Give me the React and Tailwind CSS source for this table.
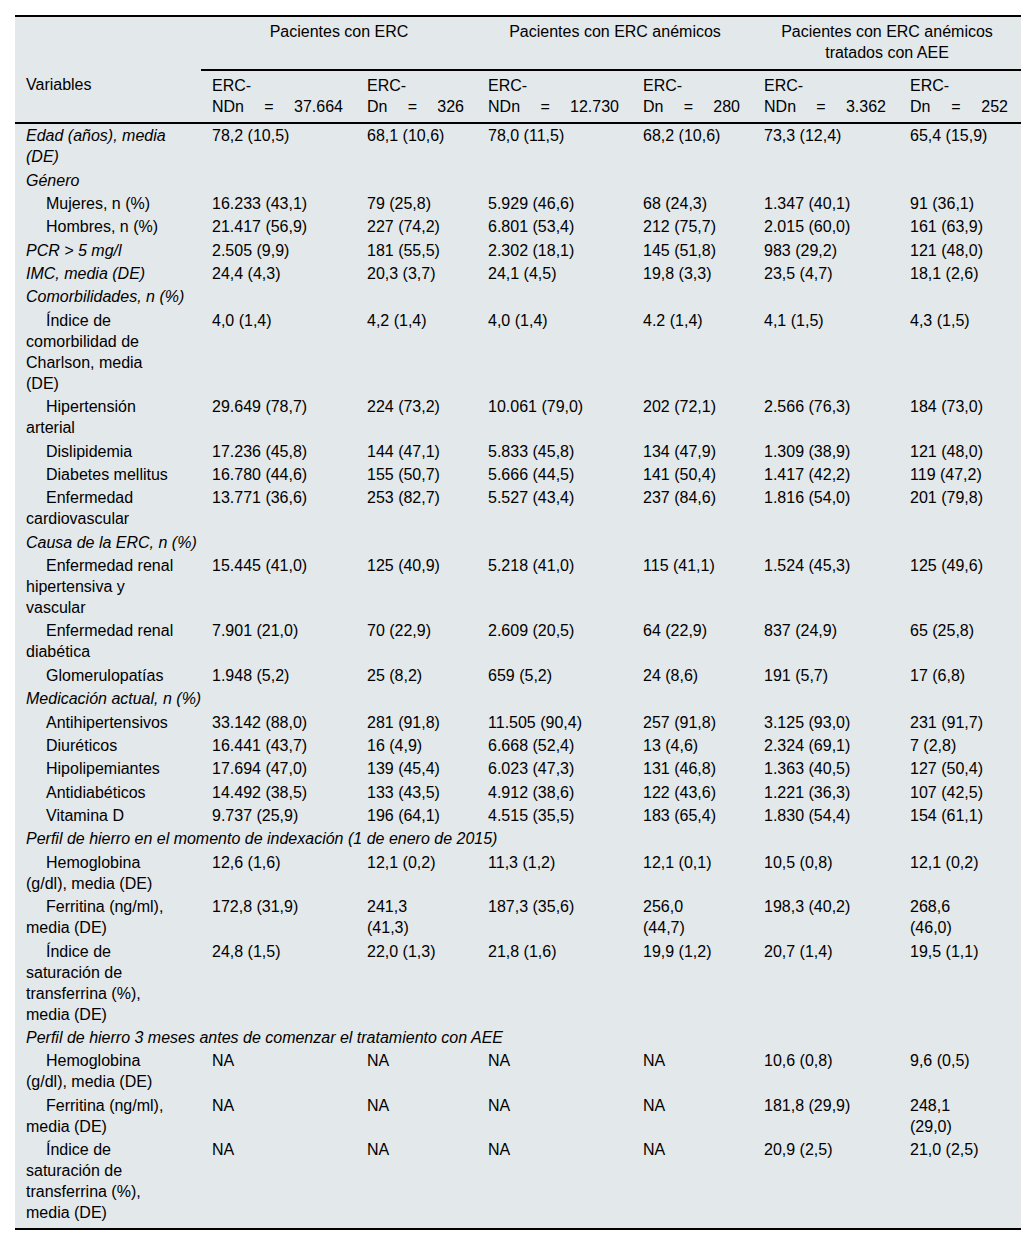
const groups = [
  { title: ["Pacientes con ERC"] },
  { title: ["Pacientes con ERC anémicos"] },
  { title: ["Pacientes con ERC anémicos", "tratados con AEE"] },
];

const subheads = [
  ["NDn", "=", "37.664"],
  ["Dn", "=", "326"],
  ["NDn", "=", "12.730"],
  ["Dn", "=", "280"],
  ["NDn", "=", "3.362"],
  ["Dn", "=", "252"],
];

// kind: "top" = italic row with values, "section" = italic row spanning, "sub" = indented row
const rows = [
  { kind: "top", label: ["Edad (años), media", "(DE)"], values: ["78,2 (10,5)", "68,1 (10,6)", "78,0 (11,5)", "68,2 (10,6)", "73,3 (12,4)", "65,4 (15,9)"] },
  { kind: "section", label: ["Género"] },
  { kind: "sub", label: ["Mujeres, n (%)"], values: ["16.233 (43,1)", "79 (25,8)", "5.929 (46,6)", "68 (24,3)", "1.347 (40,1)", "91 (36,1)"] },
  { kind: "sub", label: ["Hombres, n (%)"], values: ["21.417 (56,9)", "227 (74,2)", "6.801 (53,4)", "212 (75,7)", "2.015 (60,0)", "161 (63,9)"] },
  { kind: "top", label: ["PCR > 5 mg/l"], values: ["2.505 (9,9)", "181 (55,5)", "2.302 (18,1)", "145 (51,8)", "983 (29,2)", "121 (48,0)"] },
  { kind: "top", label: ["IMC, media (DE)"], values: ["24,4 (4,3)", "20,3 (3,7)", "24,1 (4,5)", "19,8 (3,3)", "23,5 (4,7)", "18,1 (2,6)"] },
  { kind: "section", label: ["Comorbilidades, n (%)"] },
  { kind: "sub", label: ["Índice de", "comorbilidad de", "Charlson, media", "(DE)"], values: ["4,0 (1,4)", "4,2 (1,4)", "4,0 (1,4)", "4.2 (1,4)", "4,1 (1,5)", "4,3 (1,5)"] },
  { kind: "sub", label: ["Hipertensión", "arterial"], values: ["29.649 (78,7)", "224 (73,2)", "10.061 (79,0)", "202 (72,1)", "2.566 (76,3)", "184 (73,0)"] },
  { kind: "sub", label: ["Dislipidemia"], values: ["17.236 (45,8)", "144 (47,1)", "5.833 (45,8)", "134 (47,9)", "1.309 (38,9)", "121 (48,0)"] },
  { kind: "sub", label: ["Diabetes mellitus"], values: ["16.780 (44,6)", "155 (50,7)", "5.666 (44,5)", "141 (50,4)", "1.417 (42,2)", "119 (47,2)"] },
  { kind: "sub", label: ["Enfermedad", "cardiovascular"], values: ["13.771 (36,6)", "253 (82,7)", "5.527 (43,4)", "237 (84,6)", "1.816 (54,0)", "201 (79,8)"] },
  { kind: "section", label: ["Causa de la ERC, n (%)"] },
  { kind: "sub", label: ["Enfermedad renal", "hipertensiva y", "vascular"], values: ["15.445 (41,0)", "125 (40,9)", "5.218 (41,0)", "115 (41,1)", "1.524 (45,3)", "125 (49,6)"] },
  { kind: "sub", label: ["Enfermedad renal", "diabética"], values: ["7.901 (21,0)", "70 (22,9)", "2.609 (20,5)", "64 (22,9)", "837 (24,9)", "65 (25,8)"] },
  { kind: "sub", label: ["Glomerulopatías"], values: ["1.948 (5,2)", "25 (8,2)", "659 (5,2)", "24 (8,6)", "191 (5,7)", "17 (6,8)"] },
  { kind: "section", label: ["Medicación actual, n (%)"] },
  { kind: "sub", label: ["Antihipertensivos"], values: ["33.142 (88,0)", "281 (91,8)", "11.505 (90,4)", "257 (91,8)", "3.125 (93,0)", "231 (91,7)"] },
  { kind: "sub", label: ["Diuréticos"], values: ["16.441 (43,7)", "16 (4,9)", "6.668 (52,4)", "13 (4,6)", "2.324 (69,1)", "7 (2,8)"] },
  { kind: "sub", label: ["Hipolipemiantes"], values: ["17.694 (47,0)", "139 (45,4)", "6.023 (47,3)", "131 (46,8)", "1.363 (40,5)", "127 (50,4)"] },
  { kind: "sub", label: ["Antidiabéticos"], values: ["14.492 (38,5)", "133 (43,5)", "4.912 (38,6)", "122 (43,6)", "1.221 (36,3)", "107 (42,5)"] },
  { kind: "sub", label: ["Vitamina D"], values: ["9.737 (25,9)", "196 (64,1)", "4.515 (35,5)", "183 (65,4)", "1.830 (54,4)", "154 (61,1)"] },
  { kind: "section", label: ["Perfil de hierro en el momento de indexación (1 de enero de 2015)"] },
  { kind: "sub", label: ["Hemoglobina", "(g/dl), media (DE)"], values: ["12,6 (1,6)", "12,1 (0,2)", "11,3 (1,2)", "12,1 (0,1)", "10,5 (0,8)", "12,1 (0,2)"] },
  { kind: "sub", label: ["Ferritina (ng/ml),", "media (DE)"], values: ["172,8 (31,9)", "241,3|(41,3)", "187,3 (35,6)", "256,0|(44,7)", "198,3 (40,2)", "268,6|(46,0)"] },
  { kind: "sub", label: ["Índice de", "saturación de", "transferrina (%),", "media (DE)"], values: ["24,8 (1,5)", "22,0 (1,3)", "21,8 (1,6)", "19,9 (1,2)", "20,7 (1,4)", "19,5 (1,1)"] },
  { kind: "section", label: ["Perfil de hierro 3 meses antes de comenzar el tratamiento con AEE"] },
  { kind: "sub", label: ["Hemoglobina", "(g/dl), media (DE)"], values: ["NA", "NA", "NA", "NA", "10,6 (0,8)", "9,6 (0,5)"] },
  { kind: "sub", label: ["Ferritina (ng/ml),", "media (DE)"], values: ["NA", "NA", "NA", "NA", "181,8 (29,9)", "248,1|(29,0)"] },
  { kind: "sub", label: ["Índice de", "saturación de", "transferrina (%),", "media (DE)"], values: ["NA", "NA", "NA", "NA", "20,9 (2,5)", "21,0 (2,5)"] },
];

function Lines({ parts }) {
  return parts.map((p, i) => (
    <span key={i}>
      {i > 0 && <br />}
      {p}
    </span>
  ));
}

function BodyRow({ row, last }) {
  const cell =
    "align-top pl-[11px] pr-[13px] pt-[1.2px] whitespace-nowrap " +
    (last ? "pb-[5px]" : "pb-[1.2px]");
  if (row.kind === "section") {
    return (
      <tr>
        <td colSpan={7} className={cell + " italic"}>
          {row.label[0]}
        </td>
      </tr>
    );
  }
  return (
    <tr>
      <td className={cell + (row.kind === "top" ? " italic" : " indent-5")}>
        <Lines parts={row.label} />
      </td>
      {row.values.map((v, i) => (
        <td key={i} className={cell}>
          <Lines parts={v.split("|")} />
        </td>
      ))}
    </tr>
  );
}

export default function App() {
  return (
    <div className="bg-white min-h-screen pt-[15px] pl-[15px]">
      <table
        className="table-fixed border-collapse w-[1006px] bg-[#e3e8eb] text-black text-[16px] leading-[21px] border-t-2 border-b-2 border-black"
        style={{ fontFamily: '"Liberation Sans", Arial, sans-serif' }}
      >
        <colgroup>
          <col className="w-[186px]" />
          <col className="w-[155px]" />
          <col className="w-[121px]" />
          <col className="w-[155px]" />
          <col className="w-[121px]" />
          <col className="w-[146px]" />
          <col className="w-[122px]" />
        </colgroup>
        <thead>
          <tr>
            <th className="p-0" />
            {groups.map((g, i) => (
              <th
                key={i}
                colSpan={2}
                className="align-top font-normal text-center pt-[4px] pb-[6px] px-[11px] border-b-2 border-black whitespace-nowrap"
              >
                <Lines parts={g.title} />
              </th>
            ))}
          </tr>
          <tr className="border-b-2 border-black">
            <th className="align-top font-normal text-left pl-[11px] pt-[4px] pb-[5px]">Variables</th>
            {subheads.map((s, i) => (
              <th key={i} className="align-top font-normal text-left pl-[11px] pr-[13px] pt-[4px] pb-[5px]">
                <div>ERC-</div>
                <div className="flex justify-between">
                  <span>{s[0]}</span>
                  <span>{s[1]}</span>
                  <span>{s[2]}</span>
                </div>
              </th>
            ))}
          </tr>
        </thead>
        <tbody>
          {rows.map((r, i) => (
            <BodyRow key={i} row={r} last={i === rows.length - 1} />
          ))}
        </tbody>
      </table>
    </div>
  );
}
